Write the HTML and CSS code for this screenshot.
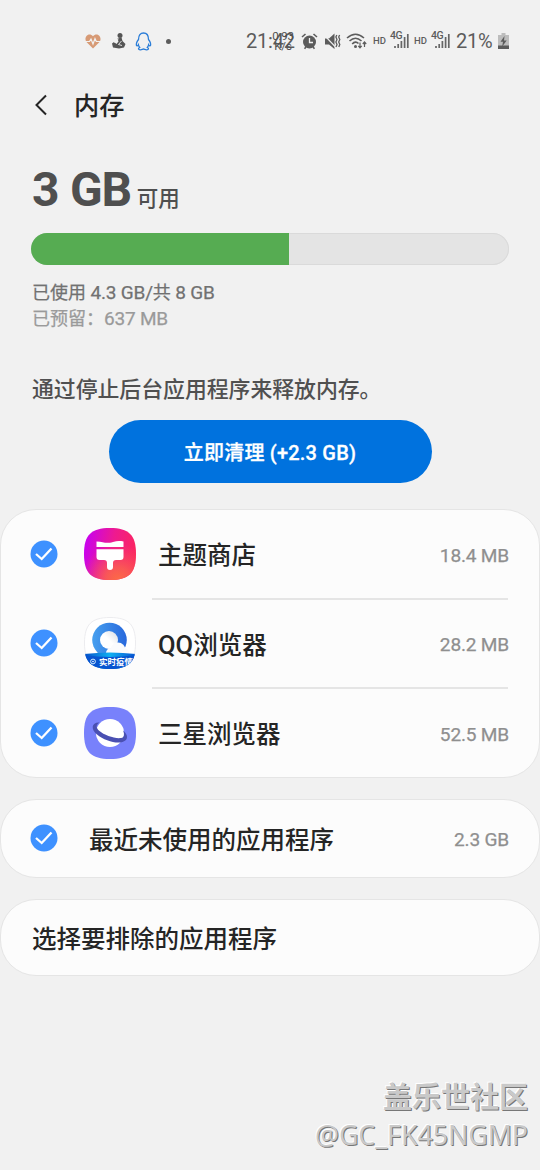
FILE: index.html
```html
<!DOCTYPE html>
<html lang="zh-CN">
<head>
<meta charset="utf-8">
<title>内存</title>
<link rel="stylesheet" href="styles.css">
</head>
<body>
<main class="screen">
  <header class="status">
    <div class="notices">
      <svg class="heart" width="16" height="15" viewBox="0 0 16 15"><path d="M8 14.5L1.5 8C-2 3.500 4-2.500 8 2.200C12-2.500 18 3.500 14.500 8Z" fill="#d79a75"/><path d="M0 7.500H4.500L6 5L8 10L10 4.500L11.300 7.500H16" fill="none" stroke="#f1f1f1" stroke-width="1.200"/></svg>
      <svg class="figure" width="14" height="16" viewBox="0 0 14 16"><circle cx="8" cy="2.600" r="2.500" fill="#555"/><path d="M5.500 5.500L9.500 4.500L10.500 8L13.500 11L12 14.500L7 15.500L1 14.500L0 10.500L2 9L4.500 11L6.500 8.500Z" fill="#555"/><path d="M6.500 6L2 9.500M9.500 8L6.500 11.500L10 12.500" fill="none" stroke="#eee" stroke-width=".9"/></svg>
      <svg class="penguin" width="17" height="19" viewBox="0 0 17 19"><path d="M3.500 7.500C3.500 3.500 5.400 1 8.500 1S13.500 3.500 13.500 7.500C15 9.500 16 11.800 15.500 13.500C15 14.300 14 13.500 13.600 12.800C13.500 14 13 14.600 12.300 15.400C14.500 16.500 13.500 18 11.500 17.800C10 17.700 9.500 17 8.500 17S7 17.700 5.500 17.800C3.500 18 2.500 16.500 4.700 15.400C4 14.600 3.500 14 3.400 12.800C3 13.500 2 14.300 1.500 13.500C1 11.800 2 9.500 3.500 7.500Z" fill="none" stroke="#2c7ed8" stroke-width="1.300"/></svg>
      <span class="dot"></span>
    </div>
    <div class="clock">21:42<span class="speed"><span>0.93</span><span>K/s</span></span></div>
    <svg class="alarm" width="17" height="17" viewBox="0 0 17 17"><path d="M1 4L4.500 1M16 4L12.500 1M3.500 15.800L5 14M13.500 15.800L12 14" stroke="#5c5c5c" stroke-width="1.600"/><circle cx="8.500" cy="9" r="6.500" fill="#5c5c5c"/><path d="M8.500 5V9.500H12" fill="none" stroke="#f1f1f1" stroke-width="1.300"/></svg>
    <svg class="mute" width="17" height="17" viewBox="0 0 17 17"><path d="M1 5.500H5L10.500 .5V16L5 11.500H1Z" fill="#5c5c5c"/><path d="M0 2L11.500 14" stroke="#f1f1f1" stroke-width="1.100"/><path d="M12.800 2L11.900 4L13 6.500L11.900 9L13 11.500L12 14M15.600 2L14.700 4L15.800 6.500L14.700 9L15.800 11.500L14.800 14" fill="none" stroke="#5c5c5c" stroke-width="1.300"/></svg>
    <svg class="wifi" width="21" height="17" viewBox="0 0 21 17"><g fill="none" stroke="#5c5c5c" stroke-width="1.600"><path d="M1 5Q9.500-2.500 18 5M3.500 8Q9.500 2.500 15.500 8M6.200 11Q9.500 7.500 12.500 10.500"/></g><circle cx="9.500" cy="13.500" r="1.500" fill="#5c5c5c"/><path d="M14 9.500V14.500M12.300 12.800L14 14.800L15.700 12.800M18.500 14V9.500M16.800 11L18.500 9L20.200 11" fill="none" stroke="#5c5c5c" stroke-width="1.200"/></svg>
    <span class="hd">HD</span>
    <span class="signal"><svg width="15" height="14" viewBox="0 0 15 14"><path d="M1 12V14M4.200 10V14M7.400 7V14M10.600 3V14M13.800 0V14" stroke="#666" stroke-width="1.700"/></svg><span class="net">4G</span></span>
    <span class="hd hd2">HD</span>
    <span class="signal"><svg width="15" height="14" viewBox="0 0 15 14"><path d="M1 12V14M4.200 10V14M7.400 7V14M10.600 3V14M13.800 0V14" stroke="#666" stroke-width="1.700"/></svg><span class="net">4G</span></span>
    <span class="percent">21%</span>
    <svg class="battery" width="11" height="16" viewBox="0 0 11 16"><path d="M3.500 0H7.500V2H11V16H0V2H3.500Z" fill="#bdbdbd"/><path d="M0 12.500H11V16H0Z" fill="#5c5c5c"/><path d="M6.500 3L2.500 8.800H5L4.200 13.500L8.700 7.500H6Z" fill="#5c5c5c"/></svg>
  </header>

  <nav class="titlebar">
    <svg width="14" height="22" viewBox="0 0 14 22"><path d="M12 1.500L2.500 11L12 20.500" fill="none" stroke="#252525" stroke-width="2"/></svg>
    <h1>内存</h1>
  </nav>

  <section class="summary">
    <div class="available"><strong>3 GB</strong><span>可用</span></div>
    <div class="meter"><div class="used"></div></div>
    <p class="usage">已使用 <span class="latin">4.3 GB/</span>共 <span class="latin">8 GB</span></p>
    <p class="reserved">已预留：<span class="latin">637 MB</span></p>
    <p class="hint">通过停止后台应用程序来释放内存。</p>
    <button class="clean">立即清理 (+2.3 GB)</button>
  </section>

  <section class="card apps">
    <div class="row">
      <svg class="check" width="28" height="28" viewBox="0 0 28 28"><circle cx="14" cy="14" r="13.500" fill="#3e91ff"/><path d="M6 14L11.700 19L21.500 8.500" fill="none" stroke="#fff" stroke-width="2.300"/></svg>
      <svg class="icon" width="52" height="52" viewBox="0 0 52 52">
        <defs><linearGradient id="theme" x1="0" y1=".2" x2="1" y2=".4"><stop stop-color="#c500f5"/><stop offset=".55" stop-color="#ee1a90"/><stop offset="1" stop-color="#fb255f"/></linearGradient><radialGradient id="coral" cx=".65" cy="1" r=".7"><stop stop-color="#fc6b45"/><stop offset=".35" stop-color="#fa6050" stop-opacity=".85"/><stop offset="1" stop-color="#fa4d60" stop-opacity="0"/></radialGradient></defs>
        <path d="M26 0C45 0 52 7 52 26S45 52 26 52S0 45 0 26S7 0 26 0Z" fill="url(#theme)"/><path d="M26 0C45 0 52 7 52 26S45 52 26 52S0 45 0 26S7 0 26 0Z" fill="url(#coral)"/>
        <path d="M12.500 13.500C20 14 22 16 29 14C33 12.800 36 13 39.500 13.500V19H12.500ZM12.500 21.300H39.500V29Q39.500 32 36.500 32H32Q29 32 29 35V39Q29 42 26 42T23 39V35Q23 32 20 32H15.500Q12.500 32 12.500 29Z" fill="#fff"/>
      </svg>
      <span class="name">主题商店</span><span class="size">18.4 MB</span>
    </div>
    <div class="row">
      <svg class="check" width="28" height="28" viewBox="0 0 28 28"><circle cx="14" cy="14" r="13.500" fill="#3e91ff"/><path d="M6 14L11.700 19L21.500 8.500" fill="none" stroke="#fff" stroke-width="2.300"/></svg>
      <svg class="icon" width="52" height="52" viewBox="0 0 52 52">
        <defs><clipPath id="tile"><path d="M26 0C45 0 52 7 52 26S45 52 26 52S0 45 0 26S7 0 26 0Z"/></clipPath><linearGradient id="ring" x1="0" y1="0" x2="1" y2="0"><stop stop-color="#47a0ef"/><stop offset="1" stop-color="#2868dc"/></linearGradient><linearGradient id="ball" x1="1" y1="0" x2="0" y2="1"><stop stop-color="#d8dce2"/><stop offset=".5" stop-color="#fff"/></linearGradient><linearGradient id="band" x1="0" y1="0" x2="1" y2="0"><stop stop-color="#0751c8"/><stop offset=".5" stop-color="#0fb0f2"/><stop offset="1" stop-color="#0755d2"/></linearGradient></defs>
        <path d="M26 .5C44.500 .5 51.500 7.500 51.500 26S44.500 51.500 26 51.500S.5 44.500 .5 26S7.500 .5 26 .5Z" fill="#fff" stroke="#ececef"/>
        <circle cx="25.500" cy="23" r="17.300" fill="url(#ring)"/><circle cx="25" cy="23" r="9" fill="url(#ball)"/>
        <g fill="#fafbfd"><circle cx="34" cy="33" r="7.500"/><circle cx="27" cy="36" r="5"/><circle cx="40" cy="36" r="5"/></g>
        <g clip-path="url(#tile)"><path d="M0 37Q26 34 52 37V52H0Z" fill="url(#band)"/><path d="M0 38Q26 42 52 38V52H0Z" fill="#0755d0"/><circle cx="9" cy="44.500" r="2.400" fill="none" stroke="#d7efff"/><circle cx="9" cy="44.500" r=".8" fill="#fff"/><text class="banner" x="15" y="47.500">实时疫情</text></g>
      </svg>
      <span class="name"><span class="qq">QQ</span>浏览器</span><span class="size">28.2 MB</span>
    </div>
    <div class="row">
      <svg class="check" width="28" height="28" viewBox="0 0 28 28"><circle cx="14" cy="14" r="13.500" fill="#3e91ff"/><path d="M6 14L11.700 19L21.500 8.500" fill="none" stroke="#fff" stroke-width="2.300"/></svg>
      <svg class="icon" width="52" height="52" viewBox="0 0 52 52">
        <path d="M26 0C45 0 52 7 52 26S45 52 26 52S0 45 0 26S7 0 26 0Z" fill="#7881fb"/>
        <circle cx="26" cy="26" r="14" fill="#fff"/>
        <path d="M15.500 15.500C7.500 15 6.500 22 13 27.500C20 33.500 32 37 38.500 35C45 33 44 27.500 39 23.500C40.500 27 41 30.500 37 31C31 32 20 28 15.500 24C12 21 11.500 18 15.500 15.500Z" fill="#4a50b2"/>
      </svg>
      <span class="name">三星浏览器</span><span class="size">52.5 MB</span>
    </div>
  </section>

  <section class="card recent">
    <svg class="check" width="28" height="28" viewBox="0 0 28 28"><circle cx="14" cy="14" r="13.500" fill="#3e91ff"/><path d="M6 14L11.700 19L21.500 8.500" fill="none" stroke="#fff" stroke-width="2.300"/></svg>
    <span class="name">最近未使用的应用程序</span><span class="size">2.3 GB</span>
  </section>

  <section class="card exclude"><span class="name">选择要排除的应用程序</span></section>

  <footer class="watermark"><span class="community">盖乐世社区</span><span class="user">@GC_FK45NGMP</span></footer>
</main>
</body>
</html>
```

FILE: styles.css
```css
* { box-sizing: border-box; }
body { margin: 0; background: #f1f1f1; }
h1, p { margin: 0; font-weight: 500; }

.screen {
  width: 540px;
  height: 1170px;
  overflow: hidden;
  display: flex;
  flex-direction: column;
  font-family: Roboto, "Noto Sans CJK SC", sans-serif;
  font-weight: 500;
  color: #252525;
  white-space: nowrap;
}

.status {
  height: 82px;
  flex: none;
  display: flex;
  align-items: center;
  padding-left: 85px;
  color: #5c5c5c;
  font-weight: 400;
}
.status svg { flex: none; }
.notices { display: flex; align-items: center; width: 161px; }
.figure { margin-left: 11px; }
.penguin { margin-left: 9px; }
.dot { width: 5px; height: 5px; margin-left: 14px; border-radius: 50%; background: #5c5c5c; }
.clock { position: relative; width: 55px; font-size: 20px; line-height: 24px; letter-spacing: -.2px; }
.speed {
  position: absolute;
  left: 25px;
  top: 2px;
  width: 24px;
  display: flex;
  flex-direction: column;
  align-items: center;
  color: #505050;
  font-size: 11.500px;
  font-weight: 400;
  line-height: 10px;
}
.mute { margin-left: 6px; }
.wifi { margin-left: 5px; }
.hd { width: 14px; margin-left: 6px; font-size: 9.500px; line-height: 12px; font-weight: 500; padding-bottom: 1px; }
.hd2 { margin-left: 5px; }
.signal { position: relative; width: 18px; height: 14px; margin: 0 0 1px 4px; display: flex; align-items: flex-end; justify-content: flex-end; }
.net { position: absolute; left: -1px; top: -2px; height: 8px; font-size: 10.500px; line-height: 8px; letter-spacing: -.5px; font-weight: 500; background: #f1f1f1; }
.percent { width: 42px; margin-left: 6px; font-size: 20px; letter-spacing: -.2px; }

.titlebar { height: 46px; display: flex; align-items: center; padding-left: 34px; gap: 26px; flex: none; }
h1 { font-size: 25.200px; line-height: 36px; padding-top: 3px; }

.summary { height: 381px; flex: none; padding: 33px 31px 0; display: flex; flex-direction: column; }
.available { height: 72px; display: flex; align-items: baseline; gap: 6px; padding-left: 1px; line-height: 58px; color: #4f4f4f; }
.available strong { font-size: 48px; font-weight: 700; letter-spacing: -1.300px; word-spacing: 1.200px; }
.available span { font-size: 21.500px; }
.meter { height: 32px; flex: none; border-radius: 16px; overflow: hidden; background: #e4e4e4; box-shadow: inset 0 0 0 1px #dadada; }
.used { width: 54%; height: 100%; background: #56ac52; }
.usage, .reserved { padding-left: 1px; font-size: 18px; line-height: 26px; font-weight: 400; -webkit-text-stroke: .25px currentColor; }
.latin { font-size: 19px; letter-spacing: -.2px; }
.usage { height: 26px; margin-top: 15px; color: #717171; }
.reserved { height: 26px; color: #9a9a9a; }
.hint { margin-top: 41px; padding-left: 1px; font-size: 21.900px; line-height: 34px; letter-spacing: -.05px; color: #505050; }
.clean {
  align-self: center;
  width: 323px;
  height: 63px;
  flex: none;
  margin-top: 13px;
  padding: 2px 0 0;
  border: 0;
  border-radius: 32px;
  background: #0072de;
  color: #fff;
  font: 500 20px/28px Roboto, "Noto Sans CJK SC", sans-serif;
  -webkit-text-stroke: .3px currentColor;
  letter-spacing: .2px;
}

.card { flex: none; background: #fcfcfc; border: 1px solid #e5e5e5; border-radius: 36px; }
.apps { height: 269px; }
.row { height: 89.500px; display: flex; align-items: center; padding: 0 30px 2px 29px; position: relative; }
.row + .row::before { content: ""; position: absolute; left: 151px; right: 31px; top: -2px; height: 2px; background: #e5e5e5; }
.check, .icon { flex: none; }
.icon { margin-left: 26px; }
.name { font-size: 24.500px; line-height: 36px; padding-top: 4px; }
.row .name { margin-left: 22px; padding-top: 5px; }
.qq { font-size: 25.500px; line-height: 30px; }
.size { margin-left: auto; padding-top: 3px; font-size: 19.100px; letter-spacing: -.2px; color: #8f8f8f; font-weight: 400; -webkit-text-stroke: .25px currentColor; }
.banner { font: 700 8.500px "Noto Sans CJK SC", sans-serif; fill: #fff; }
.recent { height: 79px; margin-top: 21px; display: flex; align-items: center; padding: 0 30px 0 29px; }
.recent .check { margin-bottom: 1px; }
.recent .name { margin-left: 31px; }
.recent .size { padding-top: 2px; }
.exclude { height: 77px; margin-top: 21px; display: flex; align-items: center; padding-left: 31px; }

.watermark {
  margin-top: 99px;
  padding-right: 12px;
  display: flex;
  flex-direction: column;
  align-items: flex-end;
  color: #c9c9c9;
  text-shadow: 1px 1px 0 #777, -1px -1px 0 #fff;
}
.community { font: 700 29px/40px "Noto Sans CJK SC", sans-serif; }
.user { font: 400 26.700px/36px "Noto Sans", sans-serif; padding-top: 2px; }
```
